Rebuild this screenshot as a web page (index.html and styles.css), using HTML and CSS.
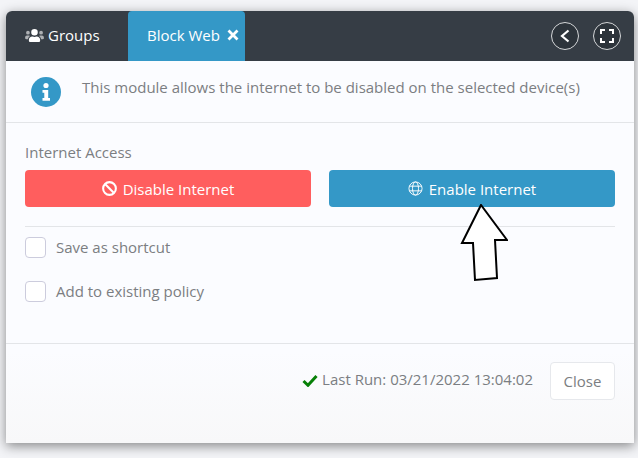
FILE: index.html
```html
<!DOCTYPE html>
<html lang="en">
<head>
<meta charset="utf-8">
<title>Block Web</title>
<link rel="stylesheet" href="styles.css">
</head>
<body>
<div class="modal">
  <header class="tabbar">
    <div class="tab">
      <svg class="tab-icon" viewBox="0 0 640 512" width="19" height="15"><path fill="#fff" d="M96 224a64 64 0 1 0 0-128 64 64 0 0 0 0 128zm448 0a64 64 0 1 0 0-128 64 64 0 0 0 0 128zm32 32h-64c-17.600 0-33.500 7.100-45.100 18.600 40.300 22.100 68.900 62 75.100 109.400h66c17.700 0 32-14.300 32-32v-32c0-35.300-28.700-64-64-64zm-402.900 18.600C161.500 263.100 145.600 256 128 256H64c-35.300 0-64 28.700-64 64v32c0 17.700 14.300 32 32 32h65.900c6.300-47.400 34.900-87.300 75.200-109.400z" opacity=".6"/><path fill="#fff" d="M320 256a112 112 0 1 0 0-224 112 112 0 0 0 0 224zm76.800 32h-8.300c-20.800 10-43.900 16-68.500 16s-47.600-6-68.500-16h-8.300C179.600 288 128 339.600 128 403.200V432c0 26.500 21.500 48 48 48h288c26.500 0 48-21.500 48-48v-28.800c0-63.600-51.600-115.200-115.200-115.200z"/></svg>
      <span>Groups</span>
    </div>
    <div class="tab tab-active">
      <span>Block Web</span>
      <svg class="tab-close" viewBox="0 0 12 12" width="12" height="12"><path d="M1.500 1.500l9 9M10.500 1.500l-9 9" stroke="#fff" stroke-width="2.800" fill="none"/></svg>
    </div>
    <div class="tools">
      <button class="tool" type="button" aria-label="Back"><svg viewBox="0 0 14 14" width="14" height="14"><path d="M10.500 1.500L4 7l6.500 5.500" stroke="#fff" stroke-width="2.200" fill="none"/></svg></button>
      <button class="tool" type="button" aria-label="Fullscreen"><svg viewBox="0 0 14 14" width="14" height="14"><path d="M1 5V1h4M9 1h4v4M13 9v4H9M5 13H1V9" stroke="#fff" stroke-width="2" fill="none"/></svg></button>
    </div>
  </header>

  <section class="info">
    <svg class="info-icon" viewBox="0 0 30 30" width="30" height="30"><circle cx="15" cy="15" r="15" fill="#3498c7"/><circle cx="15" cy="8.500" r="2.600" fill="#fff"/><path fill="#fff" d="M11.500 13h5.700v8h1.800v2.800h-7.500V21h1.800v-5.200h-1.800z"/></svg>
    <p class="info-text">This module allows the internet to be disabled on the selected device(s)</p>
  </section>

  <section class="body">
    <div class="label">Internet Access</div>
    <div class="actions">
      <button class="btn btn-red" type="button">
        <svg viewBox="0 0 16 16" width="15" height="15"><circle cx="8" cy="8" r="6.800" stroke="#fff" stroke-width="2.200" fill="none"/><path d="M3.500 3.500l9 9" stroke="#fff" stroke-width="2.200"/></svg>
        Disable Internet
      </button>
      <button class="btn btn-blue" type="button">
        <svg viewBox="0 0 16 16" width="15" height="15" fill="none" stroke="#fff" stroke-width="1"><circle cx="8" cy="8" r="7"/><ellipse cx="8" cy="8" rx="3.200" ry="7"/><path d="M1.500 5.500h13M1.500 10.500h13"/></svg>
        Enable Internet
      </button>
    </div>
    <hr class="rule">
    <label class="check"><span class="box"></span><span class="check-text">Save as shortcut</span></label>
    <label class="check"><span class="box"></span><span class="check-text">Add to existing policy</span></label>
  </section>

  <footer class="foot">
    <svg viewBox="0 0 16 13" width="16" height="13"><path d="M1.500 7l4.500 4.300L14.500 2" stroke="#078007" stroke-width="3" fill="none"/></svg>
    <span class="last-run">Last Run: 03/21/2022 13:04:02</span>
    <button class="close" type="button">Close</button>
  </footer>

  <svg class="arrow" viewBox="0 0 48 78" width="48" height="78"><path d="M21 1L2 39l11 0 2 37 22-2-2-38 12 0z" fill="#fff" stroke="#000" stroke-width="2"/></svg>
</div>
</body>
</html>
```

FILE: styles.css
```css
* { box-sizing: border-box; }
html, body { height: 100%; }
body {
  margin: 0;
  padding: 11px 4px 0 6px;
  background: #f3f4f7;
  font-family: "Open Sans", "Liberation Sans", sans-serif;
  font-size: 15px;
  color: #7b7e82;
  overflow: hidden;
}
.modal {
  position: relative;
  width: 628px;
  height: 432px;
  border-radius: 6px 6px 0 0;
  background: linear-gradient(#fbfcff 0, #fbfcff 340px, #f8f8f9 432px);
  box-shadow: 0 3px 12px rgba(0, 0, 0, .45);
}
.tabbar {
  display: flex;
  height: 50px;
  background: #363d45;
  border-radius: 6px 6px 0 0;
}
.tab {
  display: flex;
  align-items: center;
  width: 122px;
  padding: 0 0 2px 19px;
  gap: 4px;
  color: #fff;
}
.tab-active {
  width: 117px;
  gap: 7px;
  background: #3498c7;
  border-radius: 4px 4px 0 0;
}
.tools {
  display: flex;
  gap: 14px;
  margin-left: auto;
  padding: 11px 13px 0 0;
}
.tool {
  display: flex;
  align-items: center;
  justify-content: center;
  width: 28px;
  height: 28px;
  padding: 0;
  border: 1px solid #d5d7d9;
  border-radius: 50%;
  background: #2d343b;
}
.info {
  display: flex;
  align-items: center;
  gap: 21px;
  height: 62px;
  padding: 0 25px;
  border-bottom: 1px solid #e3e5e8;
}
.info-text { margin: 0 0 10px; }
.info-icon { flex: none; }
.body { padding: 19px 19px 0; height: 221px; border-bottom: 1px solid #e3e5e8; }
.label { line-height: 20px; }
.actions {
  display: grid;
  grid-template-columns: 286px 286px;
  gap: 18px;
  margin-top: 8px;
}
.btn {
  display: flex;
  align-items: center;
  justify-content: center;
  gap: 6px;
  height: 37px;
  padding: 0;
  border: 0;
  border-radius: 4px;
  color: #fff;
  font: inherit;
}
.btn-red { background: #ff5e5e; }
.btn-blue { background: #3498c7; }
.rule { margin: 19px 0 10px; border: 0; border-top: 1px solid #e3e5e8; }
.check {
  display: flex;
  align-items: center;
  gap: 10px;
  height: 21px;
  margin-bottom: 23px;
}
.check-text { margin-bottom: 2px; }
.box {
  width: 21px;
  height: 21px;
  background: #fff;
  border: 1px solid #ccd;
  border-radius: 4px;
}
.foot {
  display: flex;
  align-items: center;
  padding: 18px 19px 0 0;
  justify-content: flex-end;
}
.foot svg { margin-right: 4px; margin-top: -2px; }
.last-run { margin: -5px 17px 0 0; }
.close {
  width: 65px;
  height: 38px;
  padding: 0;
  background: #fff;
  border: 1px solid #e6e8ec;
  border-radius: 4px;
  color: #7b7e82;
  font: inherit;
}
.arrow { position: absolute; left: 454px; top: 193px; }
```
